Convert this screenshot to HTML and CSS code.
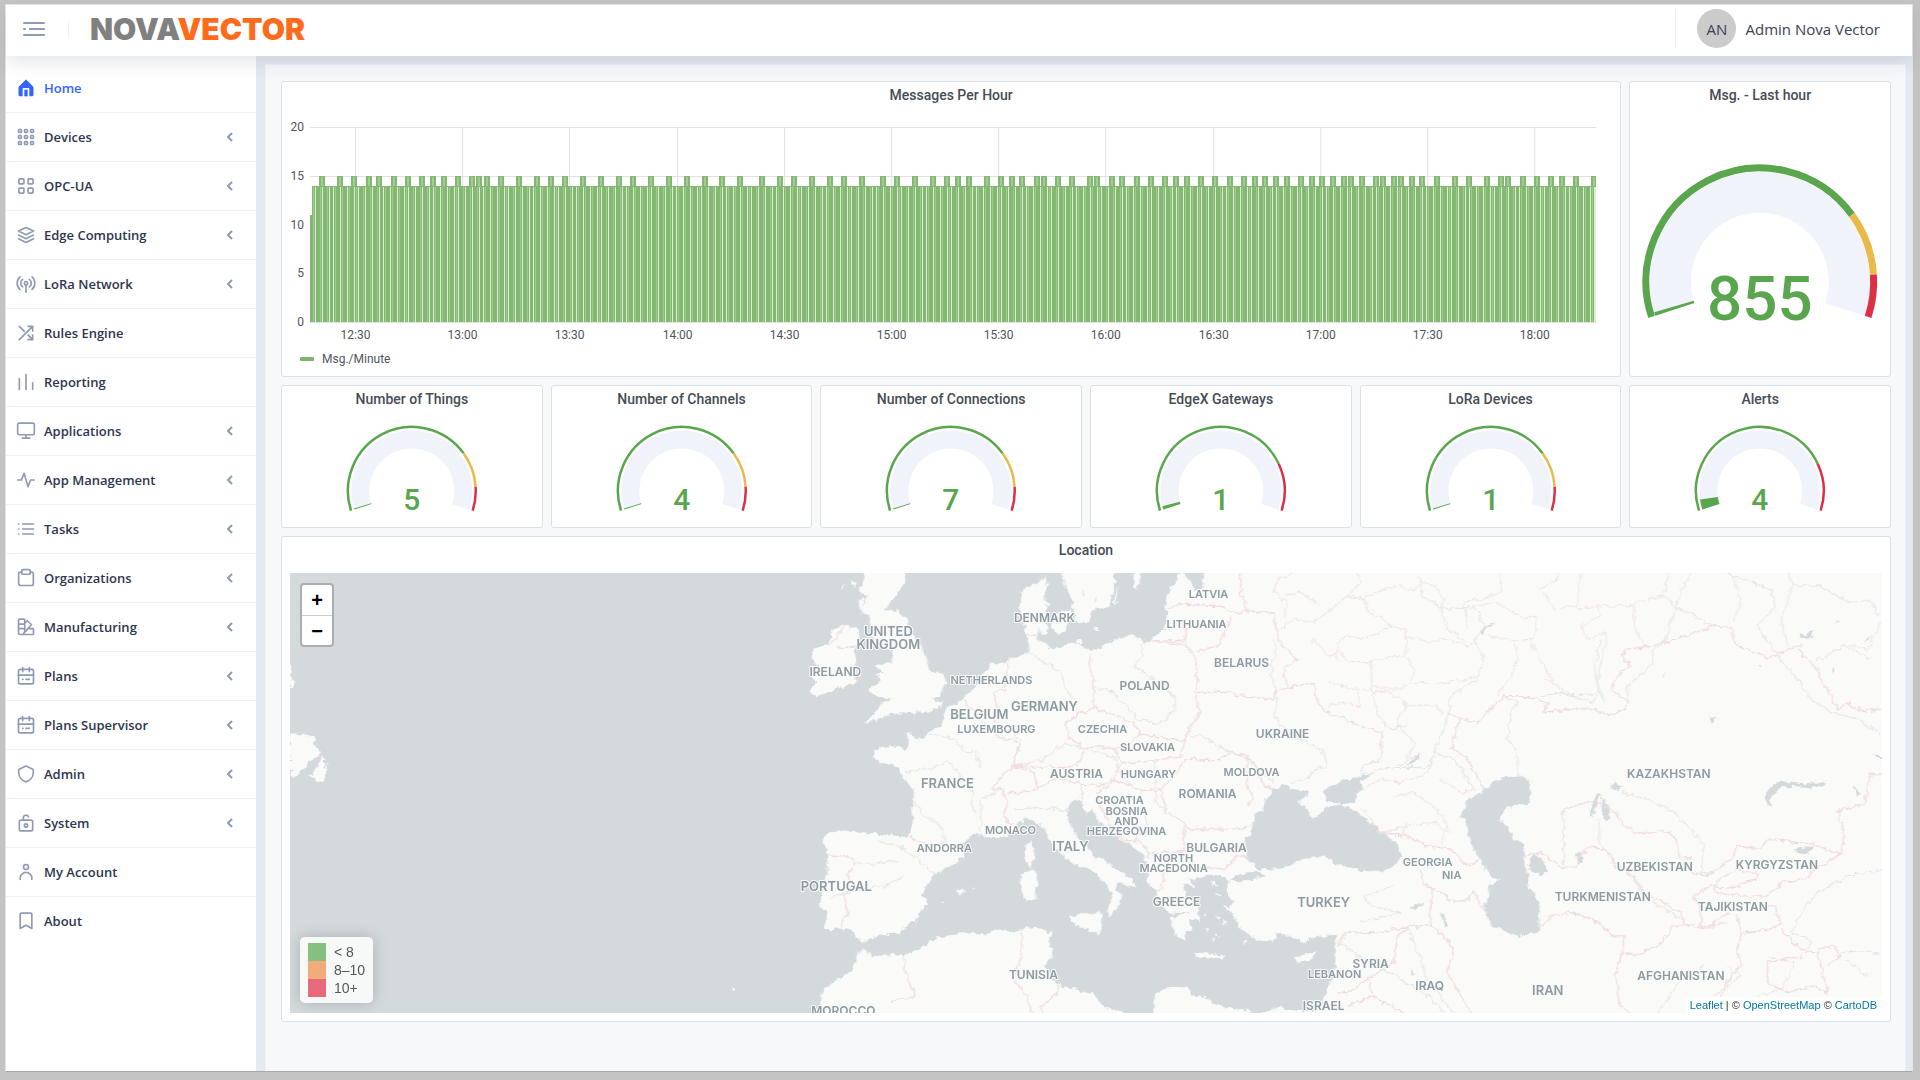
FILE: index.html
```html
<!DOCTYPE html>
<html lang="en">
<head>
<meta charset="utf-8">
<meta name="viewport" content="width=device-width, initial-scale=1">
<title>Nova Vector</title>
<link rel="stylesheet" href="styles.css">
</head>
<body>
<div class="app">
  <header class="header">
    <button class="menu-toggle" type="button" aria-label="Toggle menu">
      <svg viewBox="0 0 22 16" width="22" height="16"><path d="M1 2h20M7 8h14M1 14h20M1 8h1"/></svg>
    </button>
    <a class="logo" href="#"><span class="logo-nova">NOVA</span><span class="logo-vector">VECTOR</span></a>
    <div class="user"><span class="avatar">AN</span><span class="user-name">Admin Nova Vector</span></div>
  </header>
  <div class="body">
    <nav class="sidebar">
      <ul class="menu">
        <li><a class="item active" href="#"><svg class="icon solid" viewBox="0 0 24 24"><rect x="10" y="14" width="4" height="8"/><path d="M20.42 10.18L12.71 2.3a1 1 0 0 0-1.42 0l-7.71 7.89A2 2 0 0 0 3 11.62V20a2 2 0 0 0 1.89 2H8v-9a1 1 0 0 1 1-1h6a1 1 0 0 1 1 1v9h3.11A2 2 0 0 0 21 20v-8.38a2.07 2.07 0 0 0-.58-1.44z"/></svg>Home</a></li>
        <li><a class="item" href="#"><svg class="icon" viewBox="0 0 24 24"><g id="k"><rect x="3" y="3" width="3.5" height="3.5" rx="1"/><rect x="10.2" y="3" width="3.5" height="3.5" rx="1"/><rect x="17.5" y="3" width="3.5" height="3.5" rx="1"/></g><use href="#k" y="7.2"/><use href="#k" y="14.5"/></svg>Devices<svg class="chev" viewBox="0 0 8 10"><path d="M6 1L2 5l4 4"/></svg></a></li>
        <li><a class="item" href="#"><svg class="icon" viewBox="0 0 24 24"><rect x="3.500" y="3.500" width="6" height="6" rx="1"/><rect x="14.500" y="3.500" width="6" height="6" rx="1"/><rect x="3.500" y="14.500" width="6" height="6" rx="1"/><rect x="14.500" y="14.500" width="6" height="6" rx="1"/></svg>OPC-UA<svg class="chev" viewBox="0 0 8 10"><path d="M6 1L2 5l4 4"/></svg></a></li>
        <li><a class="item" href="#"><svg class="icon" viewBox="0 0 24 24"><path d="M12 3l9 4.3-9 4.5-9-4.5zM3 12l9 4.5 9-4.5M3 16.4l9 4.6 9-4.6"/></svg>Edge Computing<svg class="chev" viewBox="0 0 8 10"><path d="M6 1L2 5l4 4"/></svg></a></li>
        <li><a class="item" href="#"><svg class="icon" viewBox="0 0 24 24"><circle cx="12" cy="11" r="2"/><path d="M12 13v9M8 15.500a5.500 5.500 0 0 1 0-9M16 15.500a5.500 5.500 0 0 0 0-9M4.800 18.500a10 10 0 0 1 0-15M19.200 18.500a10 10 0 0 0 0-15"/></svg>LoRa Network<svg class="chev" viewBox="0 0 8 10"><path d="M6 1L2 5l4 4"/></svg></a></li>
        <li><a class="item" href="#"><svg class="icon" viewBox="0 0 24 24"><path d="M4 20L20 4M4 4l6 6M14.500 14.500L20 20M14.500 4H20v5.500M14.500 20H20v-5.500"/></svg>Rules Engine</a></li>
        <li><a class="item" href="#"><svg class="icon" viewBox="0 0 24 24"><path d="M12 3v18M4 8v13M20 13v8"/></svg>Reporting</a></li>
        <li><a class="item" href="#"><svg class="icon" viewBox="0 0 24 24"><rect x="2" y="2.500" width="20" height="14" rx="2"/><path d="M12 17v3.500M7.500 20.500h9"/></svg>Applications<svg class="chev" viewBox="0 0 8 10"><path d="M6 1L2 5l4 4"/></svg></a></li>
        <li><a class="item" href="#"><svg class="icon" viewBox="0 0 24 24"><path d="M2 12h4.500L9.700 4l4.800 16 3-8H22"/></svg>App Management<svg class="chev" viewBox="0 0 8 10"><path d="M6 1L2 5l4 4"/></svg></a></li>
        <li><a class="item" href="#"><svg class="icon" viewBox="0 0 24 24"><path d="M8 6h13M8 12h13M8 18h13M3 6h.5M3 12h.5M3 18h.5"/></svg>Tasks<svg class="chev" viewBox="0 0 8 10"><path d="M6 1L2 5l4 4"/></svg></a></li>
        <li><a class="item" href="#"><svg class="icon" viewBox="0 0 24 24"><path d="M6.500 5H5.200A2 2 0 0 0 3.200 7v12a2 2 0 0 0 2 2h13.600a2 2 0 0 0 2-2V7a2 2 0 0 0-2-2h-1.300"/><rect x="7" y="2" width="10" height="5.500" rx="1"/></svg>Organizations<svg class="chev" viewBox="0 0 8 10"><path d="M6 1L2 5l4 4"/></svg></a></li>
        <li><a class="item" href="#"><svg class="icon" viewBox="0 0 24 24"><path d="M3 3.500a1 1 0 0 1 1-1h5.500a1 1 0 0 1 1 1V17a4 4 0 0 1-4 4H5a2 2 0 0 1-2-2zM3 8.500h7M3 14h7M11 7l2.500-2.500 5 4.500-9.500 11M6.500 21H20a1 1 0 0 0 1-1v-5a1 1 0 0 0-1-1h-5"/></svg>Manufacturing<svg class="chev" viewBox="0 0 8 10"><path d="M6 1L2 5l4 4"/></svg></a></li>
        <li><a class="item" href="#"><svg class="icon" viewBox="0 0 24 24"><rect x="3" y="4" width="18" height="17.500" rx="2"/><path d="M8 2v4.500M16 2v4.500M3 11h18M8 16h.5M12 16h4"/></svg>Plans<svg class="chev" viewBox="0 0 8 10"><path d="M6 1L2 5l4 4"/></svg></a></li>
        <li><a class="item" href="#"><svg class="icon" viewBox="0 0 24 24"><rect x="3" y="4" width="18" height="17.500" rx="2"/><path d="M8 2v4.500M16 2v4.500M3 11h18M8 16h.5M12 16h4"/></svg>Plans Supervisor<svg class="chev" viewBox="0 0 8 10"><path d="M6 1L2 5l4 4"/></svg></a></li>
        <li><a class="item" href="#"><svg class="icon" viewBox="0 0 24 24"><path d="M12 2.500l8.700 4v4.700c0 4.300-3.700 8.500-8.700 10.300-5-1.800-8.700-6-8.700-10.300V6.500z"/></svg>Admin<svg class="chev" viewBox="0 0 8 10"><path d="M6 1L2 5l4 4"/></svg></a></li>
        <li><a class="item" href="#"><svg class="icon" viewBox="0 0 24 24"><rect x="4" y="8.500" width="16" height="13" rx="2"/><circle cx="12" cy="15" r="2"/><path d="M8.800 8.500V5.700a3.200 3.200 0 0 1 6.200-1"/></svg>System<svg class="chev" viewBox="0 0 8 10"><path d="M6 1L2 5l4 4"/></svg></a></li>
        <li><a class="item" href="#"><svg class="icon" viewBox="0 0 24 24"><circle cx="12" cy="6" r="3"/><path d="M5 21v-1.500a7 7 0 0 1 14 0V21"/></svg>My Account</a></li>
        <li><a class="item" href="#"><svg class="icon" viewBox="0 0 24 24"><path d="M5 21V4a1.500 1.500 0 0 1 1.500-1.500h11a1.500 1.500 0 0 1 1.500 1.500V21L12 17z"/></svg>About</a></li>
      </ul>
    </nav>
    <main class="main">
      <div class="dashboard">
        <section class="panel panel-chart">
          <h2 class="title">Messages Per Hour</h2>
          <svg class="chart" id="chart" viewBox="282 108 1338 239" role="img" aria-label="Messages per hour"></svg>
          <p class="chart-legend"><span class="chart-key"></span>Msg./Minute</p>
        </section>
        <section class="panel">
          <h2 class="title">Msg. - Last hour</h2>
          <svg class="gauge gauge-large" viewBox="-130 -174 260 268" data-size="large" data-value="0.4" data-label="855" data-limits="75,90"></svg>
        </section>
        <section class="panel"><h2 class="title">Number of Things</h2><svg class="gauge" viewBox="-130 -79 260 116" data-value="0" data-label="5" data-limits="75,90"></svg></section>
        <section class="panel"><h2 class="title">Number of Channels</h2><svg class="gauge" viewBox="-130 -79 260 116" data-value="0" data-label="4" data-limits="75,90"></svg></section>
        <section class="panel"><h2 class="title">Number of Connections</h2><svg class="gauge" viewBox="-130 -79 260 116" data-value="0" data-label="7" data-limits="75,90"></svg></section>
        <section class="panel"><h2 class="title">EdgeX Gateways</h2><svg class="gauge" viewBox="-130 -79 260 116" data-value="1" data-label="1" data-limits="80,80"></svg></section>
        <section class="panel"><h2 class="title">LoRa Devices</h2><svg class="gauge" viewBox="-130 -79 260 116" data-value="0" data-label="1" data-limits="75,90"></svg></section>
        <section class="panel"><h2 class="title">Alerts</h2><svg class="gauge" viewBox="-130 -79 260 116" data-value="4" data-label="4" data-limits="80,80"></svg></section>
        <section class="panel panel-map">
          <h2 class="title">Location</h2>
          <div class="map">
            <svg class="map-svg" viewBox="0 0 1591 440" preserveAspectRatio="xMinYMin slice">
              <defs><filter id="rough" filterUnits="userSpaceOnUse" x="0" y="0" width="1591" height="440"><feTurbulence type="fractalNoise" baseFrequency="0.16" numOctaves="3" seed="4"/><feDisplacementMap in="SourceGraphic" scale="7" xChannelSelector="R" yChannelSelector="G"/></filter></defs>
              <g filter="url(#rough)">
              <g transform="translate(490 -14) scale(.33333)">
                <g class="land">
                  <path d="M1195 20L1195 52 1175 85 1157 110 1155 150 1160 190 1150 215 1120 230 1100 250 1085 240 1060 228 1000 245 960 265 930 278 905 262 870 250 820 275 805 262 770 240 775 215 780 190 800 180 795 140 808 130 790 120 800 80 795 52 760 75 725 95 718 150 730 180 735 225 745 255 740 285 700 295 680 300 670 310 630 315 605 350 585 385 555 410 530 435 495 445 490 490 470 505 445 522 415 535 390 530 395 518 378 518 385 555 375 570 340 562 310 562 278 575 282 595 300 610 355 625 365 655 400 690 400 730 395 780 388 825 370 832 300 825 240 818 190 818 160 815 130 830 125 850 140 870 142 940 125 1000 118 1040 138 1055 135 1110 200 1108 225 1125 245 1155 270 1135 320 1125 360 1122 380 1095 410 1085 420 1055 443 1035 428 1010 440 975 465 945 520 915 550 885 545 855 580 822 610 830 650 840 680 830 710 800 735 778 775 790 795 810 805 845 835 875 865 905 910 925 950 945 985 985 992 1015 980 1060 985 1075 1005 1050 1022 1025 1025 1005 1003 990 1015 965 1050 985 1068 985 1055 960 985 915 975 895 945 895 910 860 890 830 870 800 858 760 860 735 895 715 905 730 915 765 935 750 945 770 990 825 1050 860 1090 890 1100 925 1100 970 1125 1000 1140 1035 1165 1060 1230 1062 1165 1075 1175 1095 1190 1130 1215 1140 1215 1115 1235 1115 1222 1080 1262 1085 1255 1050 1215 1010 1210 970 1240 985 1225 960 1275 950 1330 955 1345 965 1335 990 1355 1030 1345 1050 1365 1080 1380 1110 1430 1140 1480 1145 1490 1122 1530 1130 1565 1150 1600 1135 1630 1130 1670 1125 1662 1165 1665 1215 1655 1260 1640 1290 1625 1335 1600 1355 1545 1355 1500 1345 1440 1362 1400 1400 3400 1400 3400 20Z"/>
                  <path d="M1118 1400L1120 1310 1150 1288 1190 1285 1228 1290 1232 1305 1290 1322 1300 1335 1380 1350 1450 1365 1450 1400ZM1040 1400L1040 1362 1010 1355 965 1340 940 1305 880 1290 830 1275 800 1240 790 1220 815 1190 815 1165 800 1145 815 1120 790 1115 780 1105 735 1105 700 1120 650 1110 610 1125 560 1120 470 1135 420 1165 370 1190 330 1185 280 1190 255 1170 240 1165 215 1230 150 1275 125 1300 120 1330 80 1400Z"/>
                  <path d="M248 20L375 20 375 52 372 75 340 120 310 150 350 155 380 185 385 210 415 250 440 295 445 335 490 345 497 370 480 410 455 420 485 428 480 445 440 458 390 462 330 465 300 480 248 495 285 460 300 435 335 418 300 415 265 400 262 388 300 370 290 345 310 345 285 325 290 315 335 310 340 275 310 270 280 255 275 215 265 170 245 160 260 110 235 95 250 70Z"/>
                  <path d="M155 215L190 198 235 210 240 245 222 280 228 320 225 370 180 385 140 405 105 415 88 395 110 370 90 350 115 325 95 300 100 270 150 250ZM840 20H1003L1000 90 985 145 940 150 925 190 885 190 875 130 855 85ZM1060 20H1088L1070 95 1058 85ZM1018 75L1003 140 998 130ZM825 165L872 150 858 215 835 230 812 205ZM775 192L802 195 805 225 780 228ZM940 203l14 5-8 9zM888 240l14 5-3 12-10-3zM735 860L755 848 762 890 750 922 735 905ZM720 945L755 928 770 945 765 1020 735 1028 725 1000ZM865 1070L900 1065 968 1062 955 1125 925 1115 870 1085ZM522 998l28-12 4 14-14 10zM570 982l15 3-5 5zM480 1028l10-5 2 8zM183 72l8 8-3 18zM210 62l18 12-4 18zM235 130l14-20 3 12-6 42zM1242 1178l92 10-4 10-84-7zM1542 1195l68-20-24 30-36 6zM1300 1070l18 4-5 8zM1275 1105l12 5-7 7zM1305 1120l10 6-9 6zM1325 1085l14 3-8 8zM1290 968l13-3 3 13-11 3zM1305 1000l15 6-6 6zM1330 1040l20 7-10 6zM1385 1150l12-12 3 8-10 14zM1290 1140l10 4-5 5zM1265 1060l10 4-5 5z"/>
                </g>
                <g class="water">
                  <path d="M1510 675L1480 690 1455 720 1445 755 1420 765 1412 825 1392 840 1400 905 1435 930 1500 932 1550 905 1580 893 1640 893 1670 915 1740 935 1810 938 1850 915 1862 890 1855 860 1820 830 1770 790 1720 755 1685 740 1640 745 1600 778 1585 770 1580 745 1550 730 1585 705 1585 695 1530 690Z"/>
                  <path d="M1630 700L1650 680 1700 660 1745 650 1780 642 1740 670 1750 690 1725 705 1720 730 1680 735 1640 725ZM1345 960L1390 940 1435 938 1455 950 1420 962 1370 970ZM1190 20H1270L1265 90 1245 95 1225 60Z"/>
                  <path d="M2175 650L2210 650 2248 665 2248 700 2250 735 2210 735 2180 750 2155 770 2155 782 2180 800 2190 830 2230 860 2235 920 2245 960 2240 985 2260 1000 2275 1030 2278 1115 2210 1130 2160 1110 2120 1085 2108 1040 2125 1000 2125 975 2155 965 2120 940 2085 880 2060 830 2058 790 2035 775 2060 725 2110 695 2140 670ZM2243 900L2260 885 2280 895 2302 935 2280 950 2243 930Z"/>
                  <path d="M2465 715L2485 740 2488 780 2475 790 2462 755ZM2440 710L2460 705 2435 775 2427 770ZM2485 680L2505 670 2528 685 2500 690ZM2948 715L2970 685 3000 665 3040 672 3080 675 3140 665 3125 685 3080 684 3030 680 2995 687 2970 710 2968 748ZM3040 870L3105 860 3080 885 3050 882ZM2385 885L2400 880 2410 900 2395 912ZM3215 680L3240 705 3225 712ZM3270 588L3320 595 3320 610ZM1886 1043l25-12 14 5-18 16zM1978 1062l12 5 12 35-10 3zM1890 1228l12 18-8 4zM1880 618l24-24 8-20 3 18-20 26zM3060 228l40-12-8 18-30 4zM2785 470l20 5-15 15zM3148 328l12 5-6 12zM2930 315l14 0-3 8zM3248 248l26-20-8 16zM2640 355l15-15-5 15zM3160 190l18-6-5 8zM905 95l5 5-3 15zM940 120l8-5-2 10zM2120 195l30-5-30 12-14 28-6-15z"/>
                </g>
                <g class="river">
                  <path d="M370 640L440 632 500 608 530 630 545 680 580 700 572 735 585 760M600 825L603 715 640 710 655 690M445 525L520 540 550 575 585 580 600 625M400 725L430 770 480 800 495 850M295 845L360 862 410 900 455 935 465 950M210 915L280 915 330 905 355 910M150 1015L240 990 320 980 370 950M745 280L790 310 840 335 850 385 890 430M705 620L780 605 860 550 905 570 1000 590 1010 620 1045 680M940 385L1000 400 1070 480 1140 495 1185 450 1180 410 1130 370 1060 320 1085 290 1085 255M700 750L780 745 860 755M1125 600L1125 730 1160 760M650 490L720 540 700 610M1215 530L1260 530 1350 580 1400 590 1430 630 1480 670M1475 240L1485 270 1470 330 1490 420 1480 460 1500 500 1560 540 1620 570 1640 620 1600 630 1580 660 1530 670M1920 60L1925 115 2000 150 2080 140 2110 200 2080 250 2110 290 2090 360 2010 410 2000 480 1960 580 2020 600 2080 690M1850 620L1910 590M1740 645L1830 625 1940 625 1960 590M2180 420L2210 430 2190 460 2180 540 2210 580 2215 650M1770 300L1775 400 1790 470 1830 510 1880 500M2280 410L2340 402 2430 430 2455 400 2440 330 2460 240M2730 45L2700 100 2680 160 2650 250 2620 270 2610 320 2540 380 2540 430M2840 45L2970 90 2985 140 2930 200 2960 250 3040 350 3090 420 3150 460 3230 480 3300 525M2525 700L2600 720 2680 760 2730 810 2770 860 2760 940 2790 940M2455 780L2455 850 2490 900 2560 960 2590 1010 2700 1080M2630 1362L2690 1270 2770 1215M3035 1120L3060 1060 3110 1000 3200 950 3300 935M3035 1120L3090 1145 3080 1170M1670 1150L1740 1190 1860 1260 1940 1310 1990 1362M1880 1105L1920 1200 1940 1260 2020 1362M1840 980L1750 1010 1770 1040 1860 1060 1740 1090M3180 1180L3240 1175 3300 1185M3035 80L3120 80 3200 130 3270 125 3290 170 3300 160M2470 430L2450 360 2480 220M2280 90L2330 60 2330 42M2340 410L2450 400"/>
                </g>
                <g class="region">
                  <path d="M1500 210L1540 180 1600 190 1650 150 1700 110 1750 120 1760 150 1830 200 1870 210 1880 260 1870 290 1800 300 1760 310 1700 310 1680 280 1640 290 1600 240 1590 250M1510 180L1520 130 1480 100 1490 60 1540 42M1620 140L1560 100 1510 110M1700 110L1740 70 1730 42M1740 120L1790 100 1860 80 1900 95 1920 60M1830 200L1780 230 1740 240 1700 230 1670 250 1670 310M1880 290L1900 340 1890 370 1860 390 1800 390 1770 380M1640 370L1730 390 1740 440 1680 430 1640 440M1740 390L1830 400 1880 440 1850 480 1860 510 1900 550 1880 600M1900 370L1990 370 2060 360 2090 350M1880 230L1940 250 2000 240 2060 260 2090 250M1910 60L1960 80 1990 120 1980 150 2000 210 2060 250M2060 210L2050 130 2110 120 2160 100 2160 42M2080 140L2150 130 2230 180 2270 170 2260 240 2200 245 2120 230M2200 250L2210 300 2180 370 2150 410M2250 250L2280 310 2320 370M1880 440L1970 440 1990 470M1960 585L1940 640 1860 670 1800 660 1760 680M1840 710L1900 700 1970 750 2000 800 1980 860M1740 740L1800 820 1890 800 1960 790 2010 820M1880 790L1860 830 1940 860M2090 690L2040 700 1980 660M2400 42L2390 140 2320 150 2290 100M2390 150L2450 140 2460 170 2400 200 2420 240 2480 220M2450 140L2560 140 2560 200 2590 260M2560 130L2650 110 2660 42M2650 110L2690 150 2760 180 2790 200M2850 50L2880 120 2860 190M3020 42L3035 80 3000 180 3020 260M3100 310L3190 260 3270 300M3190 260L3260 270 3300 190M2290 360L2330 380 2370 410 2440 400M3190 1200L3260 1250M2840 1220L2880 1250 2800 1310M2960 1190L3040 1210 3000 1290 2930 1310"/>
                </g>
                <g class="border">
                  <path d="M930 285L925 320 940 360 940 445 895 465 855 490 865 530 910 570 890 620 850 625 765 625 700 620 680 635 650 665 640 690 670 695 680 730 670 760 680 790 700 795M940 445L980 460 1060 490 1080 525 1050 550 1000 570 950 560 910 570M1080 525L1150 535 1215 545 1200 590 1150 600 1080 610 1020 610 1000 570M1215 545L1230 500 1260 460 1240 400 1250 370 1245 300 1215 255 1120 250M1020 610L1000 660 960 680 900 675 830 655 770 690 730 700 680 700M770 690L760 640 700 620M900 675L905 720M1000 660L1080 695 1140 690 1180 650 1220 600 1300 605 1360 580 1420 610 1450 680 1480 690M1140 690L1160 760 1210 790 1220 810 1380 810 1410 800M990 675L950 700 960 740 1000 830 1060 850 1070 830 1110 810 1090 770M1210 800L1210 870 1150 920 1150 970 1125 1005M1070 840L1110 880 1180 880 1210 870 1240 920 1330 930 1370 890 1400 895M1110 880L1100 900M720 550L700 620M720 550L650 530 630 510 600 480 550 425M640 490L650 450 640 400 670 390 685 305M380 830L430 855 500 855 540 860M142 890L220 895 225 920 205 940 205 990 190 1010 200 1055 183 1105M155 250L190 205M165 265L230 265M735 225L770 230M370 1195L380 1260 403 1300 395 1315 330 1330M725 1120L720 1200 700 1260 740 1310 755 1362M830 1275L830 1300 785 1340 785 1362M1160 150L1190 135 1310 140 1370 165 1400 155 1380 100 1380 42M1400 155L1480 165 1495 250 1550 300 1510 330 1520 385 1600 370 1610 430 1640 460 1740 500 1805 520 1800 600 1745 620 1745 640M1350 170L1340 200 1310 260 1245 280M1250 400L1340 400 1400 415 1480 420 1480 400 1520 385M1110 245L1215 245 1215 210 1190 200M1400 590L1400 680 1420 720 1400 740M1805 820L1880 830 1940 860 2010 870 2060 920 2095 900M1920 930L1930 975 1980 1000 2020 1030 2060 1020 2080 1000 2108 1050M1930 975L1955 990 1945 1100 1880 1105 1790 1120 1730 1120 1690 1125 1670 1160M1880 1105L1850 1130 1840 1210 1700 1300 1665 1300M1765 1270L1775 1310 1700 1340M1775 1310L1870 1362M1945 1100L1970 1110 2020 1170 2000 1240 2030 1290 2070 1362M2000 460L2040 480 2090 490 2170 410 2220 410 2300 430 2290 460 2360 450 2440 450 2480 470 2530 450 2540 430 2500 400 2490 390 2520 340 2550 320 2520 290 2540 270 2620 260 2680 240 2760 215 2800 200 2850 205 2865 260 2930 280 2960 300 3050 260 3060 255M3050 270L3100 320 3170 455 3195 430 3240 455 3300 450M2040 480L2010 560 2060 600 2110 690M2275 1110L2310 1070 2380 1060 2450 1090 2500 1130 2530 1130 2525 1180 2570 1190 2640 1150 2680 1095 2760 1105 2800 1090 2840 1060M2525 1180L2505 1240 2515 1340 2550 1362M2235 890L2280 880 2340 925 2385 925 2390 900 2430 860 2490 885 2500 920 2560 950 2590 1000 2700 1060 2710 1095M2348 925V752L2440 722 2490 750 2555 822 2660 815 2690 850 2695 890 2730 900M2730 940L2780 950 2850 900 2870 860 2940 870 2960 840 3100 855 3180 885 3100 930 3070 960 3000 970 2960 1010 2880 1010 2800 1000 2810 960 2850 940M2740 1010L2790 980 2840 990 2920 960 2930 945 2860 930M2740 1010L2760 1050 2760 1110 2830 1090M2870 1060L2880 1125 2960 1110 3000 1095 2980 1040 2950 1040M2880 1125L2870 1160 2880 1220 2850 1250 2820 1310M3000 1110L3060 1170 3110 1180 3120 1220 3140 1300 3100 1280 3020 1300 2960 1270 2960 1210 3060 1190M3110 1170L3160 1160 3180 1190 3140 1220M3180 885L3190 830 3170 755 3250 735 3270 642 3300 652"/>
                </g>
              </g>
              <path class="land" d="M0 90l2 6-1 8 3 6-2 5-2 1zM0 160l14 1 12 3-3 6 8 8-3 5-8 4-6 8-14 2zM0 200l10-7 2 3-8 8H0zM20 202l6-6 6-12 4 2-2 8 3-2-3 16-6 2-3-5zM441 415l4 2-3 1z"/>
              </g>
              <g class="labels">
                <g class="lg"><text x="598" y="63">UNITED</text><text x="598" y="76">KINGDOM</text><text x="754" y="138">GERMANY</text><text x="689" y="146">BELGIUM</text><text x="657" y="215">FRANCE</text><text x="780" y="278">ITALY</text><text x="546" y="318">PORTUGAL</text><text x="1033" y="334">TURKEY</text><text x="1257" y="422">IRAN</text></g>
                <g class="md"><text x="545" y="103">IRELAND</text><text x="754" y="49">DENMARK</text><text x="951" y="94">BELARUS</text><text x="854" y="117">POLAND</text><text x="992" y="165">UKRAINE</text><text x="786" y="205">AUSTRIA</text><text x="917" y="225">ROMANIA</text><text x="926" y="279">BULGARIA</text><text x="886" y="333">GREECE</text><text x="1378" y="205">KAZAKHSTAN</text><text x="1364" y="298">UZBEKISTAN</text><text x="1486" y="296">KYRGYZSTAN</text><text x="1312" y="328">TURKMENISTAN</text><text x="1442" y="338">TAJIKISTAN</text><text x="1390" y="407">AFGHANISTAN</text><text x="1139" y="417">IRAQ</text><text x="1080" y="395">SYRIA</text><text x="1033" y="437">ISRAEL</text><text x="743" y="406">TUNISIA</text><text x="553" y="442">MOROCCO</text></g>
                <g class="sm"><text x="918" y="25">LATVIA</text><text x="906" y="55">LITHUANIA</text><text x="701" y="111">NETHERLANDS</text><text x="706" y="160">LUXEMBOURG</text><text x="812" y="160">CZECHIA</text><text x="857" y="178">SLOVAKIA</text><text x="858" y="205">HUNGARY</text><text x="961" y="203">MOLDOVA</text><text x="829" y="231">CROATIA</text><text x="836" y="242">BOSNIA</text><text x="836" y="252">AND</text><text x="836" y="262">HERZEGOVINA</text><text x="720" y="261">MONACO</text><text x="654" y="279">ANDORRA</text><text x="883" y="289">NORTH</text><text x="883" y="299">MACEDONIA</text><text x="1137" y="293">GEORGIA</text><text x="1161" y="306">NIA</text><text x="1044" y="405">LEBANON</text></g>
              </g>
            </svg>
            <div class="zoom"><button type="button" aria-label="Zoom in">+</button><button type="button" aria-label="Zoom out">−</button></div>
            <ul class="map-legend"><li><i class="swatch ok"></i>&lt; 8</li><li><i class="swatch warn"></i>8–10</li><li><i class="swatch bad"></i>10+</li></ul>
            <p class="attribution"><a href="#">Leaflet</a> | © <a href="#">OpenStreetMap</a> © <a href="#">CartoDB</a></p>
          </div>
        </section>
      </div>
    </main>
  </div>
</div>
<script src="script.js"></script>
</body>
</html>
```
FILE: styles.css
```css
* { box-sizing: border-box; }

body {
  margin: 0;
  min-height: 100vh;
  padding: 4px 7px 8px 5px;
  display: flex;
  background: #c3c3c3;
  font-family: "Open Sans", sans-serif;
  color: #222b45;
}

h2, p, ul { margin: 0; padding: 0; list-style: none; }
a { text-decoration: none; }
button { font: inherit; border: 0; background: none; padding: 0; }

.app {
  flex: 1;
  min-width: 0;
  display: flex;
  flex-direction: column;
  border: 1px solid #e4e4e4;
  border-bottom-color: #a8a8a8;
  background: #fff;
}

/* Header */
.header {
  position: relative;
  z-index: 2;
  height: 51px;
  display: flex;
  align-items: center;
  padding: 0 32px 4px 17px;
  background: #fff;
  box-shadow: 0 8px 16px rgba(44, 51, 73, 0.1);
}
.menu-toggle { display: flex; padding-right: 23px; border-right: 1px solid #edf1f7; }
.menu-toggle svg { fill: none; stroke: #8f9bb3; stroke-width: 2; stroke-linecap: round; }
.logo { margin-left: 21px; font: 900 30px/40px Inter, sans-serif; }
.logo-nova { color: #808080; }
.logo-vector { color: #ff6b1a; }
.user {
  height: 40px;
  margin-left: auto;
  padding-left: 21px;
  display: flex;
  align-items: center;
  gap: 9px;
  border-left: 1px solid #edf1f7;
  font-size: 15px;
  color: #3a4256;
}
.avatar {
  width: 39px;
  height: 39px;
  display: grid;
  place-items: center;
  border-radius: 50%;
  background: #cbcbcb;
}

/* Sidebar */
.body { flex: 1; display: flex; }
.sidebar { width: 250px; flex: none; padding-top: 7px; background: #fff; }
.menu li + li { border-top: 1px solid #edf1f7; }
.item {
  height: 48px;
  display: flex;
  align-items: center;
  gap: 8px;
  padding: 0 22px 0 10px;
  font-size: 13px;
  font-weight: 600;
  color: #2e3650;
}
.menu li:first-child .item { height: 49px; }
.icon { width: 20px; height: 20px; fill: none; stroke: #8f9bb3; stroke-width: 2; stroke-linecap: round; stroke-linejoin: round; }
.solid { fill: #3366ff; stroke: none; }
.menu .active { color: #3366ff; }
.chev { width: 8px; height: 10px; margin-left: auto; fill: none; stroke: #8f9bb3; stroke-width: 2; }

/* Dashboard */
.main { flex: 1; min-width: 0; display: flex; padding: 8px 6px 0 9px; background: #e4e9f2; }
.dashboard {
  flex: 1;
  min-width: 0;
  display: grid;
  grid-template-columns: repeat(6, minmax(0, 1fr));
  grid-auto-rows: max-content;
  align-content: start;
  gap: 8px;
  padding: 16px 14px 16px 15px;
  border: 1px solid #edf1f7;
  border-bottom: 0;
  background: #f7f8fa;
}
.panel {
  display: flex;
  flex-direction: column;
  border: 1px solid #dce1e6;
  border-radius: 3px;
  background: #fff;
  font-family: Roboto, sans-serif;
}
.panel-chart { grid-column: span 5; }
.panel-map { grid-column: 1 / -1; padding: 0 8px 8px; }
.title { height: 26px; font-size: 14px; line-height: 26px; font-weight: 500; text-align: center; color: #464c54; }
.chart { display: block; width: 100%; }
.chart text { font-size: 12px; fill: #52545c; }
.grid-line { stroke: #e2e2e4; stroke-width: 1; }
.bars { fill: #84b774; }
.bars-mid { fill: #9fcc90; }
.bars-gap { fill: #d8f0cc; }
.chart-legend { display: flex; align-items: center; gap: 8px; height: 24px; padding: 0 18px; font-size: 12px; color: #52545c; }
.chart-key { width: 14px; height: 4px; border-radius: 1px; background: #7eb26d; }

.gauge { display: block; width: 100%; fill: none; }
.gauge-band { stroke: #f0f3f9; }
.gauge-ok { stroke: #5aa64f; }
.gauge-warn { stroke: #e9b949; }
.gauge-bad { stroke: #dc3047; }
.gauge-text { fill: #5aa64f; font-size: 30px; font-weight: 500; text-anchor: middle; }
.gauge-large .gauge-text { font-size: 62px; }

/* Map */
.map { position: relative; height: 440px; margin-top: 10px; overflow: hidden; background: #d4dadc; }
.map-svg { display: block; width: 100%; height: 100%; }
.land { fill: #fafaf8; }
.water { fill: #d4dadc; }
.border, .river, .region { fill: none; stroke-width: 3; stroke-linejoin: round; }
.border { stroke: #f0dcdf; stroke-width: 4; }
.river { stroke: #e2e6e6; }
.region { stroke: #f0e4e6; }
.labels { font-family: Inter, sans-serif; font-weight: 600; fill: #8d9ba3; text-anchor: middle; paint-order: stroke; stroke: #fafaf8; stroke-width: 2px; stroke-linejoin: round; }
.lg { font-size: 13px; }
.md { font-size: 12px; }
.sm { font-size: 11px; }
.zoom { position: absolute; top: 10px; left: 10px; border: 2px solid #a9aeb0; border-radius: 4px; background: #fff; }
.zoom button { display: block; width: 30px; height: 30px; font: bold 20px/30px "Liberation Sans", sans-serif; color: #000; text-align: center; }
.zoom button + button { border-top: 1px solid #ccc; }
.map-legend {
  position: absolute;
  left: 10px;
  bottom: 10px;
  padding: 6px 8px;
  border-radius: 5px;
  background: rgba(255, 255, 255, 0.8);
  box-shadow: 0 0 15px rgba(0, 0, 0, 0.2);
  font: 14px/18px "Liberation Sans", sans-serif;
  color: #555;
}
.map-legend li { display: flex; gap: 8px; }
.swatch { width: 18px; height: 18px; }
.ok { background: #86c081; }
.warn { background: #f2ac79; }
.bad { background: #e66a7a; }
.attribution { position: absolute; right: 0; bottom: 0; padding: 0 5px; background: rgba(255, 255, 255, 0.7); font: 11px/16px "Liberation Sans", sans-serif; color: #333; }
.attribution a { color: #0078a8; }
```
FILE: script.js
```js
const NS = 'http://www.w3.org/2000/svg';
function add(parent, tag, attrs, text) {
  const el = document.createElementNS(NS, tag);
  for (const key in attrs) el.setAttribute(key, attrs[key]);
  if (text !== undefined) el.textContent = text;
  parent.appendChild(el);
  return el;
}

/* Messages per minute: 14 by default, 15 at the minutes listed here */
const peaks = [3,8,12,16,19,23,27,31,34,37,41,45,47,49,53,58,63,67,71,76,81,86,90,95,100,105,110,115,120,126,131,135,140,145,149,154,160,164,169,174,178,181,184,189,193,196,199,203,205,209,213,218,220,224,227,231,235,239,242,245,249,253,257,261,264,267,270,273,277,280,283,286,289,291,294,298,300,303,305,308,311,315,320,324,329,333,335,339,343,347,350,354,359];
const chart = document.getElementById('chart');
const left = 310, right = 1596, base = 322, step = 3.572;
const yOf = v => Math.round(base - v * 9.75);
for (let v = 0; v <= 20; v += 5) {
  add(chart, 'path', { class: 'grid-line', d: `M${left} ${yOf(v) + 0.5}H${right}` });
  add(chart, 'text', { x: 304, y: yOf(v) + 4, 'text-anchor': 'end' }, v);
}
for (let i = 0; i < 12; i++) {
  const x = Math.round(355 + i * 107.2) + 0.5;
  const minutes = 750 + i * 30;
  add(chart, 'path', { class: 'grid-line', d: `M${x} ${yOf(20)}V${base}` });
  add(chart, 'text', { x, y: 339, 'text-anchor': 'middle' }, `${Math.floor(minutes / 60)}:${String(minutes % 60).padStart(2, '0')}`);
}
let body = '', mid = '';
const gap = `M312 ${yOf(14)}H${right}V${base}H312Z`;
for (let i = 0; i < 360; i++) {
  const x0 = Math.max(left, Math.round(308.6 + i * step));
  const x1 = Math.min(right, x0 + (i ? 3 : 2));
  const top = yOf(i === 0 ? 11 : 14);
  body += `M${x0} ${top}H${x1}V${base}H${x0}Z`;
  if (i % 2) mid += `M${x0 + 1} ${top + 1}h1V${base}h-1Z`;
}
for (const i of peaks) {
  const x0 = Math.round(308.6 + i * step);
  const x1 = Math.min(right, x0 + 6);
  body += `M${x0} ${yOf(15)}H${x1}V${yOf(14)}H${x0}Z`;
  mid += `M${x0 + 2} ${yOf(15) + 1}h2V${yOf(14)}h-2Z`;
}
body += `M312 ${yOf(14)}H${right}v1H312Z`;
const crisp = 'crispEdges';
add(chart, 'path', { class: 'bars-gap', d: gap, 'shape-rendering': crisp });
add(chart, 'path', { class: 'bars', d: body, 'shape-rendering': crisp });
add(chart, 'path', { class: 'bars-mid', d: mid, 'shape-rendering': crisp });

/* Gauges: a 216 degree arc, drawn in percent of its length */
function point(r, pct) {
  const a = (198 - pct * 2.16) * Math.PI / 180;
  return `${(r * Math.cos(a)).toFixed(2)} ${(-r * Math.sin(a)).toFixed(2)}`;
}
function arc(svg, cls, r, width, from, to) {
  if (to <= from) return;
  const large = (to - from) * 2.16 > 180 ? 1 : 0;
  add(svg, 'path', { class: cls, 'stroke-width': width, d: `M${point(r, from)}A${r} ${r} 0 ${large} 1 ${point(r, to)}` });
}
document.querySelectorAll('.gauge').forEach(svg => {
  const big = svg.dataset.size === 'large';
  const [warn, bad] = svg.dataset.limits.split(',').map(Number);
  const rim = big ? [114, 7] : [64, 2.5];
  const band = big ? [89.5, 41] : [51.5, 18];
  arc(svg, 'gauge-band', band[0], band[1], 0, 100);
  arc(svg, 'gauge-ok', band[0], band[1], 0, Number(svg.dataset.value) + 0.5);
  arc(svg, 'gauge-ok', rim[0], rim[1], 0, warn);
  arc(svg, 'gauge-warn', rim[0], rim[1], warn, bad);
  arc(svg, 'gauge-bad', rim[0], rim[1], bad, 100);
  add(svg, 'text', { class: 'gauge-text', x: 0, y: big ? 38 : 19 }, svg.dataset.label);
});
```
